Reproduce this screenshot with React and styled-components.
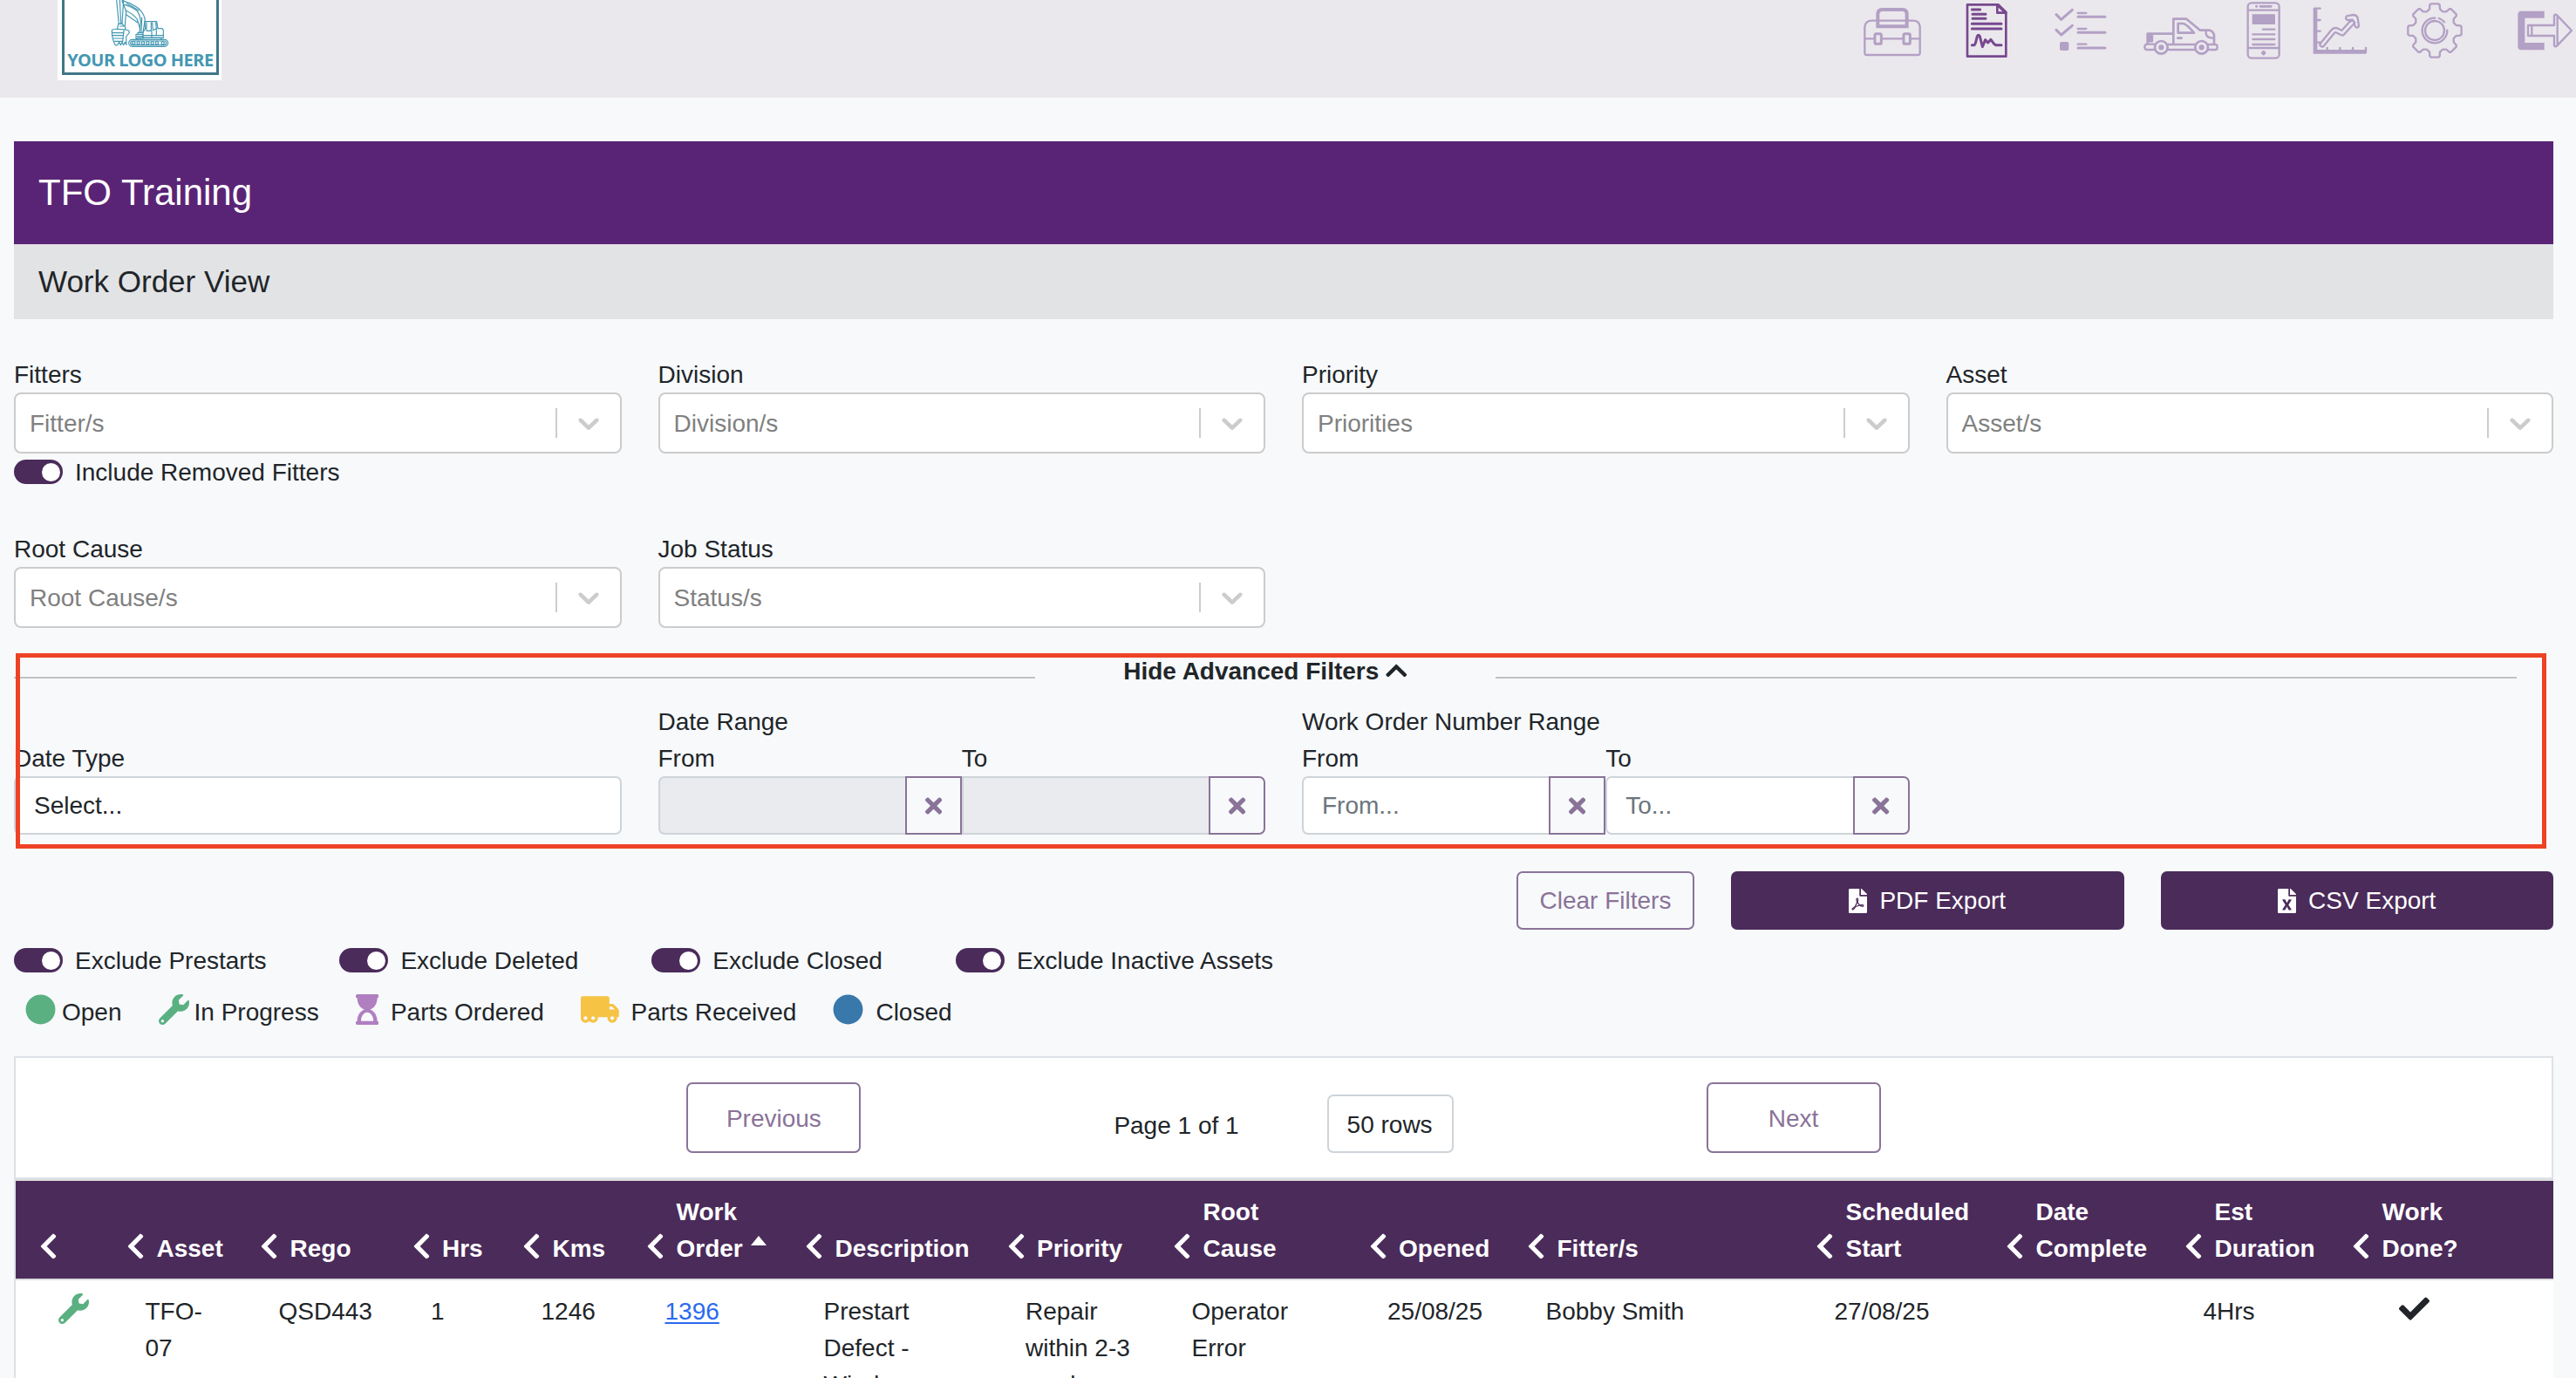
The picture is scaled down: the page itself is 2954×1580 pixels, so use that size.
import React, { useState } from 'react'
import styled, { createGlobalStyle } from 'styled-components'
import {
    FaCheck,
    FaChevronLeft,
    FaChevronUp,
    FaCircle,
    FaFileExcel,
    FaFilePdf,
    FaHourglassStart,
    FaTimes,
    FaTruckMoving,
    FaWrench,
} from 'react-icons/fa'

const plum = '#4a2b5a'
const mauve = '#8a7398'
const lilac = '#b3a0c5'

const GlobalStyle = createGlobalStyle`
    * {
        box-sizing: border-box;
    }

    body {
        margin: 0;
        background: #f7f9fb;
        color: #212529;
        font-family: "Liberation Sans", Arial, Helvetica, sans-serif;
        font-size: 28px;
        line-height: 42px;
    }

    button, input {
        font: inherit;
        margin: 0;
    }

    svg {
        display: block;
        flex-shrink: 0;
    }
`

const Page = styled.div`
    height: 100vh;
    overflow: hidden;
`

const TopBar = styled.header`
    display: flex;
    justify-content: space-between;
    align-items: flex-start;
    height: 112px;
    padding: 0 2px 0 66px;
    background: #eae8ec;
`

const LogoBox = styled.div`
    width: 188px;
    height: 92px;
    padding: 0 3px 6px 5px;
    background: #fff;
`

const LogoFrame = styled.div`
    display: flex;
    flex-direction: column;
    align-items: center;
    height: 86px;
    border: 3px solid #3f7687;
    border-top: 0;
    color: #4397b2;
`

const LogoText = styled.span`
    font-family: "Noto Sans", "Open Sans", sans-serif;
    font-size: 20px;
    font-weight: 700;
    line-height: 25px;
    letter-spacing: -0.5px;
    white-space: nowrap;
`

const Nav = styled.nav`
    display: flex;
`

const NavIcon = styled.svg`
    width: ${({ $w }) => $w}px;
    height: 70px;
    margin-left: ${({ $gap }) => $gap || 0}px;
    fill: none;
    stroke: ${({ $active }) => ($active ? '#78488f' : lilac)};
    color: ${({ $active }) => ($active ? '#78488f' : lilac)};
    stroke-width: 7;
    stroke-linecap: round;
    stroke-linejoin: round;
`

const Content = styled.main`
    width: 2928px;
    padding: 50px 0 0 16px;
`

const Title = styled.h1`
    display: flex;
    align-items: center;
    height: 118px;
    margin: 0;
    padding: 0 28px;
    background: #5a2476;
    color: #fff;
    font-size: 42px;
    font-weight: 400;
`

const SubTitle = styled.h2`
    display: flex;
    align-items: center;
    height: 86px;
    margin: 0 0 42px;
    padding: 0 28px;
    background: #e2e3e5;
    font-size: 35px;
    font-weight: 400;
`

const FilterGrid = styled.div`
    display: grid;
    grid-template-columns: repeat(4, minmax(0, 1fr));
    column-gap: 42px;
    align-items: ${({ $end }) => ($end ? 'end' : 'start')};
    height: ${({ $h }) => $h}px;
`

const Label = styled.label`
    display: block;
    height: 42px;
    line-height: 44px;
`

const Caption = styled.span`
    padding-top: 2px;
`

const MultiSelect = styled.div`
    display: flex;
    align-items: stretch;
    height: 70px;
    border: 2px solid #ccc;
    border-radius: 8px;
    background: #fff;
    color: #ccc;
`

const Placeholder = styled.span`
    flex: 1;
    padding: 12.5px 16px 0;
    color: #808080;
`

const Separator = styled.span`
    width: 2px;
    margin: 16px 0;
    background: #ccc;
`

const DropIcon = styled.svg`
    width: 40px;
    height: 40px;
    margin: 13px 16px;
    fill: currentColor;
`

const SwitchRow = styled.label`
    display: flex;
    align-items: center;
    gap: 14px;
    height: 42px;
`

const Track = styled.span`
    display: flex;
    align-items: center;
    justify-content: ${({ $on }) => ($on ? 'flex-end' : 'flex-start')};
    width: 56px;
    height: 28px;
    padding: 0 3.5px;
    border-radius: 14px;
    background: ${({ $on }) => ($on ? plum : '#bbb')};
    cursor: pointer;

    &::after {
        content: '';
        width: 21px;
        height: 21px;
        border-radius: 50%;
        background: #fff;
    }
`

const Advanced = styled.section`
    position: relative;
    height: 251px;
`

// outline drawn over the advanced filters, it covers the edge of the fields
const Highlight = styled.div`
    position: absolute;
    top: 0.5px;
    left: 1.5px;
    width: 2902.5px;
    height: 224px;
    border: 5px solid #ee4226;
    pointer-events: none;
`

const Divider = styled.div`
    display: flex;
    align-items: flex-start;
    height: 58px;
    padding-right: 42px;
`

const Rule = styled.span`
    flex: 1;
    height: 2px;
    margin-top: 28px;
    background: #c1c2c5;
`

const AdvancedToggle = styled.button`
    display: flex;
    align-items: center;
    justify-content: center;
    gap: 8px;
    width: 528px;
    height: 42px;
    padding: 0;
    border: 0;
    background: none;
    color: inherit;
    font-weight: 700;
    cursor: pointer;

    svg {
        width: 24.5px;
        height: 28px;
    }
`

const SelectBox = styled.div`
    height: 67px;
    padding: 10.5px 21px;
    border: 2px solid #ced4d9;
    border-radius: 7px;
    background: #fff;
`

const RangePair = styled.div`
    display: grid;
    grid-template-columns: repeat(2, minmax(0, 1fr));
`

const InputGroup = styled.div`
    display: flex;
    height: 67px;
`

const RangeInput = styled.input`
    flex: 1;
    min-width: 0;
    padding: 0 21px;
    border: 2px solid #ced4d9;
    border-right: 0;
    border-radius: ${({ $flat }) => ($flat ? '0' : '7px 0 0 7px')};
    background: #fff;
    color: inherit;

    &::placeholder {
        color: #6c757d;
        opacity: 1;
    }

    &:disabled {
        background: #eaebef;
    }
`

const ClearBtn = styled.button`
    display: flex;
    align-items: center;
    justify-content: center;
    width: 65px;
    padding: 0;
    border: 2px solid ${mauve};
    border-radius: ${({ $last }) => ($last ? '0 7px 7px 0' : '0')};
    background: #f7f9fb;
    color: ${mauve};

    svg {
        width: 19.25px;
        height: 28px;
    }
`

const Actions = styled.div`
    display: flex;
    justify-content: flex-end;
    gap: 42px;
    margin-bottom: 14px;
`

const OutlineBtn = styled.button`
    width: ${({ $w }) => $w}px;
    height: ${({ $h }) => $h || 67}px;
    padding: ${({ $h }) => ($h ? '2px 0 0' : '0')};
    border: 2px solid ${mauve};
    border-radius: 7px;
    background: transparent;
    color: ${mauve};
`

const ExportBtn = styled.button`
    display: flex;
    align-items: center;
    justify-content: center;
    gap: 14px;
    width: 450.5px;
    height: 67px;
    border: 0;
    border-radius: 7px;
    background: ${plum};
    color: #fff;

    svg {
        width: 21px;
        height: 28px;
    }
`

const Switches = styled.div`
    display: flex;
    gap: 84px;
    margin-bottom: 17px;
`

const Legend = styled.div`
    display: flex;
    gap: 42px;
    height: 72px;
    padding-left: 13px;
`

const LegendItem = styled.span`
    display: flex;
    gap: ${({ $gap }) => $gap}px;
    height: 42px;
    line-height: 44px;

    svg {
        width: ${({ $icon }) => $icon || 35}px;
        height: 35px;
        margin-top: 1px;
        color: ${({ $color }) => $color};
    }
`

const Panel = styled.div`
    border: 2px solid #dee2e6;
    border-bottom: 0;
    border-right: 0;
    background: #fff;
`

const Pager = styled.div`
    display: flex;
    align-items: flex-end;
    justify-content: center;
    gap: 290px;
    height: 139px;
    padding-bottom: 28px;
    border-right: 2px solid #dee2e6;
    border-bottom: 2px solid #dee2e6;
`

const PageInfo = styled.div`
    display: flex;
    align-items: flex-end;
    gap: 101px;
    height: 67px;
`

const PageText = styled.span`
    padding-bottom: 10px;
`

const RowsSelect = styled.div`
    width: 145px;
    height: 67px;
    padding: 11.5px 1px 0 0;
    border: 2px solid #ced4d9;
    border-radius: 7px;
    text-align: center;
`

const columns = '100px 153px 174.5px 126.5px 142px 182px 231.5px 190.5px 224.5px 181.5px 331px 218px 205px 192px 1fr'

const HeadRow = styled.div`
    display: grid;
    grid-template-columns: ${columns};
    align-items: end;
    height: 116px;
    padding: 0 0 14px 28px;
    border-top: 2px solid #dcdcdc;
    border-bottom: 2px solid #dcdcdc;
    background: ${plum};
    background-clip: padding-box;
    color: #fff;
    font-weight: 700;
`

const HeadCell = styled.div`
    display: flex;
    align-items: flex-end;
    white-space: pre;
`

const HeadText = styled.span`
    margin-bottom: -1px;
`

const HeadIcon = styled(FaChevronLeft)`
    width: 21px;
    height: 34px;
    margin: 0 13.5px 6.5px -1px;
`

const SortMark = styled.span`
    margin: 0 0 24px 9px;
    border: 9.5px solid transparent;
    border-top: 0;
    border-bottom: 11px solid #fff;
`

const BodyRow = styled.div`
    display: grid;
    grid-template-columns: ${columns};
    align-items: start;
    height: 180px;
    padding: 15px 0 0 28px;
`

const Cell = styled.div`
    padding-left: ${({ $pad }) => $pad || 20.5}px;
    white-space: pre;
`

const OrderLink = styled.a`
    color: #2a6af0;
    text-decoration: underline;
    text-decoration-thickness: 2px;
    text-underline-offset: 3px;
`

const Excavator = () => (
    <svg width="68" height="56" viewBox="389 0 204 168" fill="none" stroke="currentColor"
        strokeWidth="3.5" strokeLinejoin="round" strokeLinecap="round">
        {/* boom and stick */}
        <path d="M409 0 L417 82 H428 L433 0 M420 0 L424 80 M428 4 L442 38 L438 88" />
        <path d="M428 2 Q452 8 478 24 Q500 38 507 66 L500 112 M436 16 Q462 22 480 38 Q490 52 492 74 L488 112" />
        <path d="M440 36 Q464 46 480 66 L490 100 M444 12 L486 36 M442 50 L482 78 M496 60 L494 112" />
        <path d="M415 82 L412 98 M428 82 L440 94 L438 102 M420 90 H434" />
        {/* bucket */}
        <path d="M393 104 Q396 99 410 100 L440 102 Q455 104 453 112 L442 126 L443 154 L438 145 L433 155 L428 145 L423 155 L418 145 L412 155 L405 156 Q392 132 393 104 Z" />
        <path d="M395 113 H434 M396 122 H432 M399 132 H430 M402 142 H430 M434 104 L430 144" />
        {/* cab */}
        <path d="M506 74 H547 L551 98 H566 L570 104 V130 H500 V112 L508 98 Z M512 78 V106 H528 V78 M532 78 L534 104 L546 98 L544 78 M504 122 H568 M530 108 V128 M546 98 V122 H566" />
        <path d="M476 118 H500 V132 H476 Z M482 118 V112 H498 M480 125 H500" />
        {/* tracks */}
        <rect x="451" y="136" width="135" height="24" rx="12" />
        <rect x="457" y="141" width="123" height="14" rx="7" />
        {[468, 484, 500, 516, 532, 548, 568].map((cx) => (
            <circle key={cx} cx={cx} cy="148" r="5" />
        ))}
        <path d="M474 137 L482 130 H560 L566 137" />
    </svg>
)

// outline of an eight-toothed cog around (1083, 105)
const gearPath = Array.from({ length: 8 }, (_, i) => {
    const a = (i * Math.PI) / 4
    return [[-26, 66], [-18, 74], [-17, 88], [-13, 92], [13, 92], [17, 88], [18, 74], [26, 66]]
        .map(([x, y]) => {
            const px = 1083 + x * Math.cos(a) + y * Math.sin(a)
            const py = 105 + x * Math.sin(a) - y * Math.cos(a)
            return `${px.toFixed(1)} ${py.toFixed(1)}`
        })
        .join(' L')
}).join(' L')

const MainNav = () => (
    <Nav>
        <NavIcon $w={68} viewBox="108 0 204 210">
            <path d="M115 182 V92 Q118 71 140 71 H281 Q303 71 305 92 V182 Q305 189 297 189 H123 Q115 189 115 182 Z" />
            <path d="M160 91 V46 Q161 34 174 33 H246 Q259 34 260 46 V91 Z" strokeWidth="12" strokeLinejoin="miter" />
            <path d="M117 133 H149 M172 133 H248 M271 133 H303" />
            <rect x="150" y="116" width="22" height="35" rx="5" strokeWidth="9" />
            <rect x="249" y="116" width="22" height="35" rx="5" strokeWidth="9" />
        </NavIcon>
        <NavIcon $w={48} $gap={50} $active viewBox="462 0 144 210">
            <path d="M468 16 H574 L601 42 V194 H468 Z" strokeWidth="8" />
            <path d="M571 16 V44 H601 M573 19 L597 42" strokeWidth="8" />
            <path d="M484 33 H512 M486 49 H531 M486 64 H531 M484 82 H585 M484 99 H585" strokeWidth="9" />
            <path d="M484 155 H492 Q495 153 497 145 L502 125 Q506 117 511 125 L520 161 L530 137 L539 147 L549 136 L560 151 L566 155 H585" strokeWidth="9" />
        </NavIcon>
        <NavIcon $w={60} $gap={54} viewBox="768 0 180 210">
            <path d="M774 50 L791 67 L829 34 M774 103 L791 120 L829 88" strokeWidth="9" />
            <rect x="786" y="144" width="31" height="30" rx="6" fill="currentColor" stroke="none" />
            <path d="M848 45 H877 M848 99 H877 M848 152 H877" strokeWidth="7" />
            <path d="M849 58 H942 M849 112 H942 M849 165 H942" strokeWidth="9" />
        </NavIcon>
        <NavIcon $w={86} $gap={42} viewBox="84 0 258 210">
            <path d="M98 150 V116 H187 M187 150 V65 H232 L279 104 H312 Q327 109 327 124 V150" strokeWidth="8" />
            <path d="M203 81 H220 Q232 82 258 113 H203 Z M202 131 H215" strokeWidth="8" />
            <path d="M102 118 H114 V142 H102 Z" fill="currentColor" />
            <path d="M299 106 V116 Q302 131 325 131" />
            <path d="M120 152 H97 Q88 153 88 161 Q88 171 97 171 H120 M169 153 H260 M169 171 H260 M308 153 H331 Q338 154 338 161 Q338 171 331 171 H308" />
            <circle cx="145" cy="163" r="22" strokeWidth="8" />
            <circle cx="284" cy="163" r="22" strokeWidth="8" />
            <circle cx="145" cy="163" r="6" fill="currentColor" />
            <circle cx="284" cy="163" r="6" fill="currentColor" />
        </NavIcon>
        <NavIcon $w={40} $gap={32} viewBox="438 0 120 210">
            <rect x="443" y="10" width="108" height="190" rx="13" />
            <path d="M444 35 H550 M444 165 H550 M495 101 H535 M460 118 H535 M460 135 H535 M460 153 H535" />
            <path d="M486 22 H523 M472 22 H474" strokeWidth="8" />
            <rect x="458" y="49" width="79" height="35" rx="2" fill="currentColor" stroke="none" />
            <path d="M497 177 L502 182 L497 187 L492 182 Z" fill="currentColor" />
        </NavIcon>
        <NavIcon $w={64} $gap={36} viewBox="666 0 192 210">
            <path d="M675 28 V178 H850" strokeWidth="14" strokeLinejoin="miter" strokeLinecap="butt" />
            <path d="M672 29 H692 M680 69 H692 M680 107 H692 M680 146 H692 M716 165 V175 M760 165 V175 M804 165 V175 M849 165 V180" />
            <path d="M699 153 L736 108 Q742 101 750 105 L768 114 L806 72" strokeWidth="22" />
            <path d="M699 153 L736 108 Q742 101 750 105 L768 114 L806 72" strokeWidth="8" stroke="#eae8ec" />
            <path d="M783 55 Q776 65 786 69 L803 68 L813 92 Q819 99 825 90 L821 62 Q818 52 807 51 Z" fill="#eae8ec" />
            <path d="M806 72 L794 86" strokeWidth="8" stroke="#eae8ec" />
            <path d="M795 74 L803 69 L811 78" />
        </NavIcon>
        <NavIcon $w={66} $gap={43} viewBox="984 0 198 210">
            <path d={`M${gearPath} Z`} />
            <circle cx="1083" cy="105" r="33" />
            <path d="M1084 62 A43 43 0 1 0 1126 104 M1098 63 Q1108 67 1116 76" />
        </NavIcon>
        <NavIcon $w={66} $gap={61} viewBox="1368 0 198 210">
            <path d="M1463 38 H1384 Q1372 38 1372 50 V160 Q1372 172 1384 172 H1463 V147 H1396 V62 H1463 Z" fill="currentColor" stroke="none" />
            <path d="M1407 87 H1497 V54 Q1500 46 1507 53 L1557 105 L1507 157 Q1500 164 1497 156 V123 H1407 Z M1420 88 V122 M1508 56 V154" />
        </NavIcon>
    </Nav>
)

const FilterSelect = ({ label, placeholder }) => (
    <div>
        <Label>{label}</Label>
        <MultiSelect>
            <Placeholder>{placeholder}</Placeholder>
            <Separator />
            <DropIcon viewBox="0 0 20 20">
                <path d="M4.516 7.548c0.436-0.446 1.043-0.481 1.576 0l3.908 3.747 3.908-3.747c0.533-0.481 1.141-0.446 1.574 0 0.436 0.445 0.408 1.197 0 1.615-0.406 0.418-4.695 4.502-4.695 4.502-0.217 0.223-0.502 0.335-0.787 0.335s-0.57-0.112-0.789-0.335c0 0-4.287-4.084-4.695-4.502s-0.436-1.17 0-1.615z" />
            </DropIcon>
        </MultiSelect>
    </div>
)

const Switch = ({ label }) => {
    const [on, setOn] = useState(true)

    return (
        <SwitchRow>
            <Track $on={on} onClick={() => setOn(!on)} />
            <Caption>{label}</Caption>
        </SwitchRow>
    )
}

const RangeField = ({ label, placeholder, disabled, flat, last }) => (
    <div>
        <Label>{label}</Label>
        <InputGroup>
            <RangeInput placeholder={placeholder} disabled={disabled} $flat={flat} />
            <ClearBtn $last={last}><FaTimes /></ClearBtn>
        </InputGroup>
    </div>
)

const headings = [
    '', 'Asset', 'Rego', 'Hrs', 'Kms', 'Work\nOrder', 'Description', 'Priority', 'Root\nCause',
    'Opened', 'Fitter/s', 'Scheduled\nStart', 'Date\nComplete', 'Est\nDuration', 'Work\nDone?',
]

const orders = [
    {
        id: '1396',
        asset: 'TFO-\n07',
        rego: 'QSD443',
        hrs: '1',
        kms: '1246',
        description: 'Prestart\nDefect -\nWindscreen',
        priority: 'Repair\nwithin 2-3\nweeks',
        cause: 'Operator\nError',
        opened: '25/08/25',
        fitters: 'Bobby Smith',
        start: '27/08/25',
        complete: '',
        duration: '4Hrs',
    },
]

export default () => {
    const [showAdvanced, setShowAdvanced] = useState(true)

    return (
        <Page>
            <GlobalStyle />
            <TopBar>
                <LogoBox>
                    <LogoFrame>
                        <Excavator />
                        <LogoText>YOUR LOGO HERE</LogoText>
                    </LogoFrame>
                </LogoBox>
                <MainNav />
            </TopBar>

            <Content>
                <Title>TFO Training</Title>
                <SubTitle>Work Order View</SubTitle>

                <FilterGrid $h={200}>
                    <div>
                        <FilterSelect label="Fitters" placeholder="Fitter/s" />
                        <Switch label="Include Removed Fitters" />
                    </div>
                    <FilterSelect label="Division" placeholder="Division/s" />
                    <FilterSelect label="Priority" placeholder="Priorities" />
                    <FilterSelect label="Asset" placeholder="Asset/s" />
                </FilterGrid>
                <FilterGrid $h={140}>
                    <FilterSelect label="Root Cause" placeholder="Root Cause/s" />
                    <FilterSelect label="Job Status" placeholder="Status/s" />
                </FilterGrid>

                <Advanced>
                    <Divider>
                        <Rule />
                        <AdvancedToggle onClick={() => setShowAdvanced(!showAdvanced)}>
                            <Caption>{showAdvanced ? 'Hide' : 'Show'} Advanced Filters</Caption>
                            <FaChevronUp />
                        </AdvancedToggle>
                        <Rule />
                    </Divider>
                    {showAdvanced && (
                        <FilterGrid $end $h={151}>
                            <div>
                                <Label>Date Type</Label>
                                <SelectBox>Select...</SelectBox>
                            </div>
                            <div>
                                <Label>Date Range</Label>
                                <RangePair>
                                    <RangeField label="From" disabled />
                                    <RangeField label="To" disabled flat last />
                                </RangePair>
                            </div>
                            <div>
                                <Label>Work Order Number Range</Label>
                                <RangePair>
                                    <RangeField label="From" placeholder="From..." />
                                    <RangeField label="To" placeholder="To..." last />
                                </RangePair>
                            </div>
                        </FilterGrid>
                    )}
                    <Highlight />
                </Advanced>

                <Actions>
                    <OutlineBtn $w={204}>Clear Filters</OutlineBtn>
                    <ExportBtn><FaFilePdf />PDF Export</ExportBtn>
                    <ExportBtn><FaFileExcel />CSV Export</ExportBtn>
                </Actions>

                <Switches>
                    <Switch label="Exclude Prestarts" />
                    <Switch label="Exclude Deleted" />
                    <Switch label="Exclude Closed" />
                    <Switch label="Exclude Inactive Assets" />
                </Switches>

                <Legend>
                    <LegendItem $gap={7} $color="#5ab081"><FaCircle />Open</LegendItem>
                    <LegendItem $gap={6} $color="#5ab081"><FaWrench />In Progress</LegendItem>
                    <LegendItem $gap={14} $icon={26.25} $color="#b07fc0"><FaHourglassStart />Parts Ordered</LegendItem>
                    <LegendItem $gap={14} $icon={43.75} $color="#f6c344"><FaTruckMoving />Parts Received</LegendItem>
                    <LegendItem $gap={14} $color="#3878ab"><FaCircle />Closed</LegendItem>
                </Legend>

                <Panel>
                    <Pager>
                        <OutlineBtn $w={200} $h={81}>Previous</OutlineBtn>
                        <PageInfo>
                            <PageText>Page 1 of 1</PageText>
                            <RowsSelect>50 rows</RowsSelect>
                        </PageInfo>
                        <OutlineBtn $w={200} $h={81}>Next</OutlineBtn>
                    </Pager>
                    <HeadRow>
                        {headings.map((text, index) => (
                            <HeadCell key={index}>
                                <HeadIcon />
                                <HeadText>{text}</HeadText>
                                {text === 'Work\nOrder' && <SortMark />}
                            </HeadCell>
                        ))}
                    </HeadRow>
                    {orders.map((order) => (
                        <BodyRow key={order.id}>
                            <Cell><FaWrench size={35} color="#5ab081" /></Cell>
                            <Cell>{order.asset}</Cell>
                            <Cell>{order.rego}</Cell>
                            <Cell>{order.hrs}</Cell>
                            <Cell>{order.kms}</Cell>
                            <Cell><OrderLink href="#">{order.id}</OrderLink></Cell>
                            <Cell>{order.description}</Cell>
                            <Cell>{order.priority}</Cell>
                            <Cell>{order.cause}</Cell>
                            <Cell>{order.opened}</Cell>
                            <Cell>{order.fitters}</Cell>
                            <Cell>{order.start}</Cell>
                            <Cell>{order.complete}</Cell>
                            <Cell>{order.duration}</Cell>
                            <Cell $pad={53}><FaCheck size={35} /></Cell>
                        </BodyRow>
                    ))}
                </Panel>
            </Content>
        </Page>
    )
}
